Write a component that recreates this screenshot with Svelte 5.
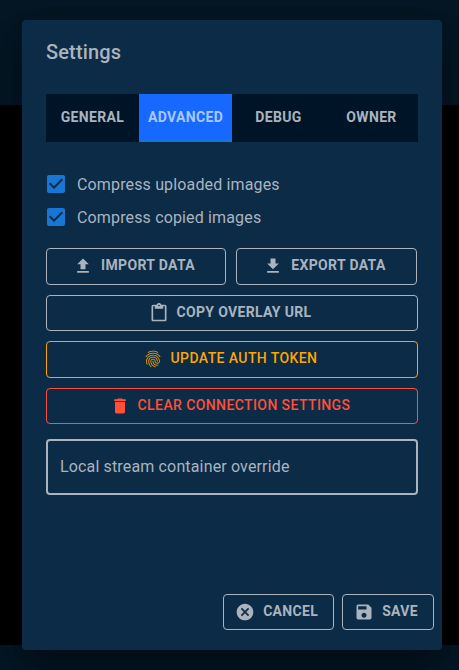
<script>
  const icons = {
    upload: 'M5 20h14v-2H5v2zm0-10h4v6h6v-6h4l-7-7-7 7z',
    download: 'M5 20h14v-2H5v2zM19 9h-4V3H9v6H5l7 7 7-7z',
    paste: 'M19 2h-4.18C14.4.84 13.3 0 12 0c-1.3 0-2.4.84-2.82 2H5c-1.1 0-2 .9-2 2v16c0 1.1.9 2 2 2h14c1.1 0 2-.9 2-2V4c0-1.1-.9-2-2-2zm-7 0c.55 0 1 .45 1 1s-.45 1-1 1-1-.45-1-1 .45-1 1-1zm7 18H5V4h2v3h10V4h2v16z',
    fingerprint: 'M17.81 4.47c-.08 0-.16-.02-.23-.06C15.66 3.42 14 3 12.01 3c-1.98 0-3.86.47-5.57 1.41-.24.13-.54.04-.68-.2-.13-.24-.04-.55.2-.68C7.82 2.52 9.86 2 12.01 2c2.13 0 3.99.47 6.03 1.52.25.13.34.43.21.67-.09.18-.26.28-.44.28zM3.5 9.72c-.1 0-.2-.03-.29-.09-.23-.16-.28-.47-.12-.7.99-1.4 2.25-2.5 3.75-3.27C9.98 4.04 14 4.03 17.15 5.65c1.5.77 2.76 1.86 3.75 3.25.16.22.11.54-.12.7-.23.16-.54.11-.7-.12-.9-1.26-2.04-2.25-3.39-2.94-2.87-1.47-6.54-1.47-9.4.01-1.36.7-2.5 1.7-3.4 2.96-.08.14-.23.21-.39.21zm6.25 12.07c-.13 0-.26-.05-.35-.15-.87-.87-1.34-1.43-2.01-2.64-.69-1.23-1.05-2.73-1.05-4.34 0-2.97 2.54-5.39 5.66-5.39s5.66 2.42 5.66 5.39c0 .28-.22.5-.5.5s-.5-.22-.5-.5c0-2.42-2.09-4.39-4.66-4.39-2.57 0-4.66 1.97-4.66 4.39 0 1.44.32 2.77.93 3.85.64 1.15 1.08 1.64 1.85 2.42.19.2.19.51 0 .71-.11.1-.24.15-.37.15zm7.17-1.85c-1.19 0-2.24-.3-3.1-.89-1.49-1.01-2.38-2.65-2.38-4.39 0-.28.22-.5.5-.5s.5.22.5.5c0 1.41.72 2.74 1.94 3.56.71.48 1.54.71 2.54.71.24 0 .64-.03 1.04-.1.27-.05.53.13.58.41.05.27-.13.53-.41.58-.57.11-1.07.12-1.21.12zM14.91 22c-.04 0-.09-.01-.13-.02-1.59-.44-2.63-1.03-3.72-2.1-1.4-1.39-2.17-3.24-2.17-5.22 0-1.62 1.38-2.94 3.08-2.94 1.7 0 3.08 1.32 3.08 2.94 0 1.07.93 1.94 2.08 1.94s2.08-.87 2.08-1.94c0-3.77-3.25-6.83-7.25-6.83-2.84 0-5.44 1.58-6.61 4.03-.39.81-.59 1.76-.59 2.8 0 .78.07 2.01.67 3.61.1.26-.03.55-.29.64-.26.1-.55-.04-.64-.29-.49-1.31-.73-2.61-.73-3.96 0-1.2.23-2.29.68-3.24 1.33-2.79 4.28-4.6 7.51-4.6 4.55 0 8.25 3.51 8.25 7.83 0 1.62-1.38 2.94-3.08 2.94s-3.08-1.32-3.08-2.94c0-1.07-.93-1.94-2.08-1.94s-2.08.87-2.08 1.94c0 1.71.66 3.31 1.87 4.51.95.94 1.86 1.46 3.27 1.85.27.07.42.35.35.61-.05.23-.26.38-.47.38z',
    trash: 'M6 19c0 1.1.9 2 2 2h8c1.1 0 2-.9 2-2V7H6v12zM19 4h-3.5l-1-1h-5l-1 1H5v2h14V4z',
    cancel: 'M12 2C6.47 2 2 6.47 2 12s4.47 10 10 10 10-4.47 10-10S17.53 2 12 2zm5 13.59L15.59 17 12 13.41 8.41 17 7 15.59 10.59 12 7 8.41 8.41 7 12 10.59 15.59 7 17 8.41 13.41 12 17 15.59z',
    save: 'M17 3H5c-1.11 0-2 .9-2 2v14c0 1.1.89 2 2 2h14c1.1 0 2-.9 2-2V7l-4-4zm-5 16c-1.66 0-3-1.34-3-3s1.34-3 3-3 3 1.34 3 3-1.34 3-3 3zm3-10H5V5h10v4z',
    check: 'M19 3H5c-1.11 0-2 .9-2 2v14c0 1.1.89 2 2 2h14c1.11 0 2-.9 2-2V5c0-1.1-.89-2-2-2zm-9 14l-5-5 1.41-1.41L10 14.17l7.59-7.59L19 8l-9 9z'
  };
  const tabs = ['General', 'Advanced', 'Debug', 'Owner'];
  let active = $state('Advanced');
  let options = $state([
    { label: 'Compress uploaded images', on: true },
    { label: 'Compress copied images', on: true }
  ]);
</script>

{#snippet button(icon, label, kind = '')}
  <button class="btn {kind}">
    <svg viewBox="0 0 24 24"><path d={icons[icon]} /></svg>
    <span>{label}</span>
  </button>
{/snippet}

<div class="page">
  <section class="dialog">
    <h2>Settings</h2>
    <div class="content">
      <nav>
        {#each tabs as tab}
          <button class="tab" class:active={tab === active} onclick={() => (active = tab)}>{tab}</button>
        {/each}
      </nav>
      <div class="options">
        {#each options as option}
          <button class="option" onclick={() => (option.on = !option.on)}>
            <svg viewBox="0 0 24 24" class:off={!option.on}><path d={icons.check} /></svg>
            <span>{option.label}</span>
          </button>
        {/each}
      </div>
      <div class="actions">
        <div class="pair">
          {@render button('upload', 'Import Data')}
          {@render button('download', 'Export Data')}
        </div>
        {@render button('paste', 'Copy Overlay URL')}
        {@render button('fingerprint', 'Update Auth Token', 'warn')}
        {@render button('trash', 'Clear Connection Settings', 'danger')}
      </div>
      <div class="field">Local stream container override</div>
    </div>
    <footer>
      {@render button('cancel', 'Cancel')}
      {@render button('save', 'Save')}
    </footer>
  </section>
</div>

<style>
  :global(body) {
    margin: 0;
    background: #000;
  }
  .page {
    box-sizing: border-box;
    width: 459px;
    height: 670px;
    padding: 20px 17px 20px 22px;
    overflow: hidden;
    background: linear-gradient(#051624 0 105px, #000 105px 645px, #051624 645px);
    font-family: Roboto, sans-serif;
    color: #a9b4bf;
  }
  .dialog {
    box-sizing: border-box;
    display: flex;
    flex-direction: column;
    width: 420px;
    height: 630px;
    border-radius: 4px;
    background: #0c2b47;
    box-shadow: 0 11px 15px -7px rgba(0, 0, 0, 0.2), 0 24px 38px 3px rgba(0, 0, 0, 0.14), 0 9px 46px 8px rgba(0, 0, 0, 0.12);
  }
  h2 {
    margin: 0;
    padding: 16px 24px;
    font-size: 20px;
    line-height: 32px;
    font-weight: 500;
    letter-spacing: 0.15px;
  }
  .content {
    flex: 1;
    padding: 10px 24px 0;
  }
  button {
    margin: 0;
    padding: 0;
    border: 0;
    background: none;
    color: inherit;
    font-family: inherit;
  }
  nav {
    display: flex;
    height: 48px;
    background: #001428;
  }
  .tab {
    flex: 1 1 0;
    min-width: 0;
    font-size: 14px;
    font-weight: 700;
    text-transform: uppercase;
    line-height: 17.5px;
    letter-spacing: 0.35px;
  }
  .tab.active {
    background: #1668ff;
    color: #a9c8ff;
    border-bottom: 2px solid #1976d2;
    padding-top: 2px;
  }
  .options {
    display: flex;
    flex-direction: column;
    padding-top: 26px;
  }
  .option {
    display: flex;
    align-items: center;
    height: 33px;
    font-size: 16px;
    letter-spacing: 0.15px;
  }
  .option svg {
    width: 24px;
    height: 24px;
    margin: 0 9px 1px -2px;
    fill: #1976d2;
  }
  .option svg.off {
    opacity: 0.4;
  }
  .actions {
    display: flex;
    flex-direction: column;
    gap: 10px;
    padding-top: 14px;
  }
  .pair {
    display: grid;
    grid-template-columns: 180px 181px;
    gap: 10px;
  }
  .btn {
    box-sizing: border-box;
    display: flex;
    align-items: center;
    justify-content: center;
    height: 36.5px;
    padding: 0 15px 0 11px;
    border: 1px solid #a9b4bf;
    border-radius: 4px;
    font-size: 14px;
    font-weight: 700;
    line-height: 24.5px;
    letter-spacing: 0.33px;
    text-transform: uppercase;
  }
  .btn span {
    padding-bottom: 1.5px;
  }
  .btn svg {
    width: 20px;
    height: 20px;
    margin-right: 8px;
    fill: currentColor;
  }
  .warn,
  .danger {
    font-weight: 500;
    letter-spacing: 0.4px;
  }
  .warn {
    color: #ffa500;
    border-color: #ffa500;
  }
  .danger {
    color: #ff5038;
    border-color: #ff5038;
  }
  .field {
    box-sizing: border-box;
    height: 56px;
    margin-top: 15px;
    padding: 0 12px;
    border: 2px solid #a9b4bf;
    border-radius: 4px;
    font-size: 16px;
    line-height: 52px;
    letter-spacing: 0.15px;
  }
  footer {
    display: flex;
    justify-content: flex-end;
    gap: 8px;
    padding: 0 8px 20px;
  }
</style>
